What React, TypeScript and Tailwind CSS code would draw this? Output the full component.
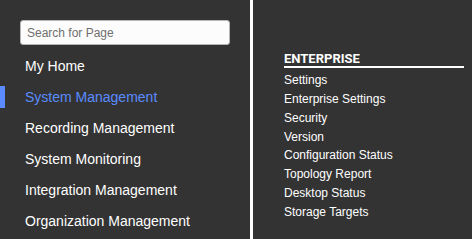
import { useState } from 'react';

// Admin navigation — left menu with search, right submenu for the selected section

const mainMenu = [
  'My Home',
  'System Management',
  'Recording Management',
  'System Monitoring',
  'Integration Management',
  'Organization Management',
];

const enterpriseLinks = [
  'Settings',
  'Enterprise Settings',
  'Security',
  'Version',
  'Configuration Status',
  'Topology Report',
  'Desktop Status',
  'Storage Targets',
];

export default function App() {
  const [active, setActive] = useState('System Management');
  const [query, setQuery] = useState('');

  return (
    <div
      className="flex h-[239px] w-[472px] overflow-hidden bg-[#333333] text-white"
      style={{ fontFamily: '"Liberation Sans", Arial, sans-serif' }}
    >
      {/* Left menu */}
      <div className="flex w-[250px] shrink-0 flex-col pt-[20px]">
        <input
          type="text"
          value={query}
          onChange={(e) => setQuery(e.target.value)}
          placeholder="Search for Page"
          className="ml-[20px] h-[25px] w-[210px] rounded-[3px] border border-[#b5b5b5] bg-[#fcfcfc] px-[6px] text-[12px] text-[#333] outline-none placeholder:text-[#6f6f6f]"
        />
        <ul className="mt-[6px] flex flex-col">
          {mainMenu.map((item) => {
            const isActive = item === active;
            return (
              <li key={item} className="relative">
                {isActive && (
                  <span className="absolute left-0 top-[4px] h-[22px] w-[5px] bg-[#5a8cff]" />
                )}
                <button
                  type="button"
                  onClick={() => setActive(item)}
                  className={`block w-full pl-[25px] text-left text-[14px] leading-[31px] ${
                    isActive ? 'text-[#5a8cff]' : 'text-white'
                  }`}
                >
                  {item}
                </button>
              </li>
            );
          })}
        </ul>
      </div>

      {/* Divider */}
      <div className="w-[3px] shrink-0 bg-white" />

      {/* Right submenu */}
      <div className="flex-1 pl-[31px] pt-[52px]">
        <div className="w-[180px] border-b-2 border-white font-['Roboto',sans-serif] text-[13px] font-bold uppercase leading-[14px]">
          Enterprise
        </div>
        <ul className="mt-[3px] flex flex-col">
          {enterpriseLinks.map((link) => (
            <li key={link} className="text-[12px] leading-[18.86px]">
              <a href="#" className="text-white">
                {link}
              </a>
            </li>
          ))}
        </ul>
      </div>
    </div>
  );
}
